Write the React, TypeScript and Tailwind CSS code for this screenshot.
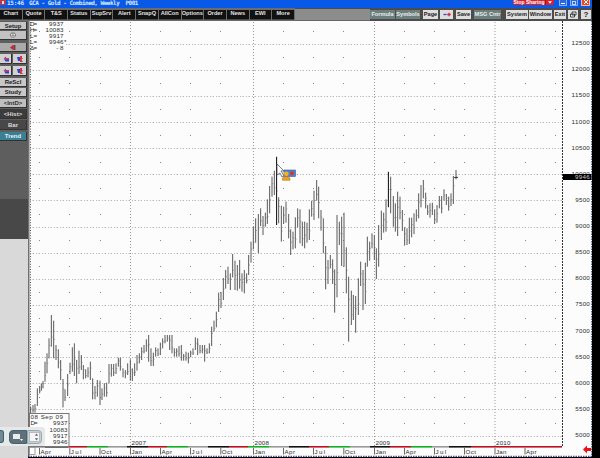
import React from "react";

type Bar = [number, number, number];

// Each group: origin in pixels, then bars as x, high, low in thirds of a pixel.
const groups: { ox: number; oy: number; bars: Bar[] }[] = [
  {
    ox: 0,
    oy: 300,
    bars: [
      [92, 320, 340], [99, 315, 338], [105, 312, 338], [112, 265, 318], [119, 258, 280], [124, 250, 272], [129, 243, 265],
      [135, 185, 245], [141, 160, 220], [147, 115, 175], [154, 45, 140], [161, 62, 175], [168, 135, 180], [175, 148, 205],
      [182, 180, 240], [189, 237, 322], [195, 268, 303], [203, 222, 288], [210, 188, 222], [217, 142, 215], [223, 130, 228],
      [230, 180, 250], [237, 152, 222], [244, 165, 210], [250, 195, 238], [257, 208, 235], [264, 202, 232], [271, 185, 240],
      [278, 235, 298], [285, 258, 298], [292, 240, 290], [300, 242, 315], [306, 265, 300], [313, 250, 290], [320, 248, 290],
      [327, 192, 250], [334, 192, 230], [341, 192, 228], [348, 190, 222], [355, 173, 200], [361, 173, 212], [369, 205, 232],
      [376, 210, 235], [383, 190, 225], [391, 178, 242], [397, 205, 243], [404, 190, 228], [411, 165, 212], [418, 160, 190],
    ],
  },
  {
    ox: 140,
    oy: 320,
    bars: [
      [5, 82, 120], [12, 75, 100], [19, 58, 95], [26, 45, 125], [33, 85, 138], [40, 98, 138], [47, 82, 110], [54, 85, 108],
      [61, 68, 105], [68, 55, 85], [75, 45, 70], [82, 45, 65], [89, 45, 90], [96, 45, 100], [103, 85, 110], [110, 85, 110],
      [117, 78, 110], [124, 75, 122], [131, 102, 122], [138, 95, 122], [145, 98, 130], [152, 92, 112], [159, 85, 105],
      [166, 52, 90], [173, 55, 105], [180, 75, 100], [187, 75, 100], [194, 75, 125], [201, 85, 102], [208, 70, 100],
      [215, 20, 78], [222, 2, 35], [229, -25, 22], [236, -82, -24], [243, -84, -36], [250, -126, -60], [257, -150, -94],
      [264, -160, -108],
    ],
  },
  {
    ox: 220,
    oy: 140,
    bars: [
      [31, 400, 450], [38, 342, 412], [45, 362, 450], [52, 375, 452], [59, 360, 446], [66, 400, 455], [73, 390, 460],
      [80, 400, 430], [86, 345, 405], [93, 305, 368], [100, 260, 328], [107, 235, 308], [115, 222, 340], [122, 205, 258],
      [129, 228, 285], [136, 218, 260], [142, 178, 252], [149, 138, 220], [156, 110, 170], [163, 92, 165], [170, 50, 255],
      [176, 172, 250], [184, 197, 305], [191, 200, 252], [198, 185, 248], [206, 222, 295], [212, 268, 345], [219, 275, 328],
      [226, 232, 325], [233, 205, 262], [240, 208, 310], [247, 245, 318], [254, 245, 325], [261, 248, 308], [268, 208, 300],
      [275, 182, 230], [282, 152, 240], [290, 120, 182], [296, 140, 235],
    ],
  },
  {
    ox: 320,
    oy: 160,
    bars: [
      [3, 150, 212], [10, 175, 280], [17, 258, 388], [24, 300, 372], [31, 285, 325], [38, 298, 372], [44, 328, 458],
      [51, 165, 412], [58, 185, 255], [65, 170, 318], [72, 158, 320], [79, 262, 400], [86, 350, 545], [94, 392, 495],
      [100, 405, 480], [107, 408, 518], [115, 355, 465], [122, 305, 378], [129, 330, 450], [136, 308, 432], [142, 230, 320],
      [149, 245, 302], [156, 220, 265], [163, 225, 300], [169, 265, 357], [176, 195, 320], [184, 152, 240], [191, 158, 218],
      [198, 118, 215], [205, 35, 142],
    ],
  },
  {
    ox: 390,
    oy: 150,
    bars: [
      [2, 80, 190], [10, 138, 230], [16, 160, 245], [23, 125, 258], [30, 140, 208], [37, 180, 243], [44, 232, 287],
      [51, 235, 285], [58, 203, 282], [65, 203, 262], [72, 190, 252], [79, 178, 215], [86, 130, 205], [93, 105, 172],
      [100, 90, 145], [107, 128, 175], [113, 165, 195], [120, 160, 203], [127, 158, 195], [134, 178, 222], [141, 165, 218],
      [148, 138, 175], [155, 138, 190], [162, 118, 152], [169, 132, 165], [176, 140, 182], [183, 130, 168], [190, 78, 162],
      [198, 60, 88],
    ],
  },
];

const prices = [12500, 12000, 11500, 11000, 10500, 10000, 9500, 9000, 8500, 8000, 7500, 7000, 6500, 6000, 5500, 5000];
const rowY = (i: number) => 44.2 + i * 26.12;

const quarters: [number, string][] = [
  [39.5, "Apr"], [69.8, "Jul"], [100, "Oct"], [130.5, "Jan"], [160.5, "Apr"], [190.5, "Jul"], [220.8, "Oct"], [253.5, "Jan"],
  [283.5, "Apr"], [313.5, "Jul"], [343.8, "Oct"], [374.5, "Jan"], [404.5, "Apr"], [434.5, "Jul"], [464.5, "Oct"],
  [495, "Jan"], [525, "Apr"],
];
const dotX = [39.5, 69.8, 100, 160.5, 190.5, 220.8, 283.5, 313.5, 343.8, 404.5, 434.5, 464.5, 525, 555];
const years: [number, string][] = [[130.5, "2007"], [253.5, "2008"], [374.5, "2009"], [495, "2010"]];

const strip: [number, number, string][] = [
  [35, 45, "#777"], [45, 68, "#111"], [68, 87, "#c01020"], [87, 108, "#10b020"], [108, 127, "#999"], [127, 148, "#111"],
  [148, 167, "#c01020"], [167, 188, "#10b020"], [188, 208, "#999"], [208, 229, "#111"], [229, 248, "#c01020"],
  [248, 269, "#10b020"], [269, 289, "#999"], [289, 309, "#111"], [309, 329, "#c01020"], [329, 350, "#10b020"],
  [350, 370, "#999"], [370, 390, "#111"], [390, 411, "#c01020"], [411, 432, "#10b020"], [432, 449, "#999"],
  [449, 471, "#111"], [471, 562, "#c01020"],
];

// Chart lettering: narrow digits with a fixed advance.
const SANS = '"Liberation Sans", Arial, sans-serif';

function Chart() {
  return (
    <svg width="564" height="436" viewBox="28 21 564 436" className="block h-[436px] w-[564px] shrink-0 bg-[#fcfcfc]">
      <g stroke="#b8b8b8" strokeWidth="1">
        {prices.map((p, i) => (
          <line key={p} x1={i === 0 ? 66 : 30} x2="562" y1={Math.floor(rowY(i)) + 0.5} y2={Math.floor(rowY(i)) + 0.5} strokeDasharray="1 1.5 1.5 2" />
        ))}
      </g>
      {years.map(([x]) => (
        <line key={x} x1={x} x2={x} y1="22" y2="446" stroke="#999" strokeDasharray="1 2" />
      ))}
      {Array.from({ length: 16 }, (_, i) =>
        dotX.map((x) => (
          <rect key={`${i}-${x}`} x={Math.floor(x)} y={Math.round(31 + i * 26.12)} width="1" height="1" fill="#888" />
        )),
      )}

      {groups.map((g) => (
        <g key={`${g.ox}-${g.oy}`}>
          {g.bars.map(([x, hi, lo], i) => {
            const px = g.ox + x / 3;
            const top = g.oy + hi / 3;
            const bottom = g.oy + lo / 3;
            const close = top + (bottom - top) * (i % 3 === 0 ? 0.35 : i % 3 === 1 ? 0.7 : 0.5);
            return (
              <g key={x}>
                <line x1={px} x2={px} y1={top} y2={bottom} stroke="#585858" strokeWidth="1" />
                <line x1={px} x2={px + 1.3} y1={close} y2={close} stroke="#777" strokeWidth="0.6" />
              </g>
            );
          })}
        </g>
      ))}
      <g stroke="#222">
        <line x1="276.5" x2="276.5" y1="157" y2="225" />
        <line x1="388.5" x2="388.5" y1="172" y2="207" />
        <line x1="454" x2="458" y1="177.5" y2="177.5" strokeWidth="0.8" />
      </g>

      <rect x="28" y="21" width="1.5" height="436" fill="#707070" />
      <line x1="30.5" x2="30.5" y1="22" y2="446" stroke="#555" strokeDasharray="1 1.6" />
      <line x1="562.5" x2="562.5" y1="21" y2="447" stroke="#333" strokeDasharray="2 1" />
      {strip.map(([a, b, c]) => (
        <rect key={a} x={a} y="446" width={b - a} height="1.6" fill={c} />
      ))}

      <g fontFamily={SANS} fontSize="6.2" fill="#2c2c2c">
        {years.map(([x, y]) => (
          <text key={y} x={x + 1} y="445" textLength="14.5">{y}</text>
        ))}
        {quarters.map(([x, m]) => (
          <g key={x}>
            <line x1={x} x2={x} y1="448" y2="454.5" stroke="#444" strokeWidth="0.8" />
            <text x={x + 1} y="453.5" textLength="10.5">{m}</text>
          </g>
        ))}
        {["D=", "H=", "L=", "L=", "Δ="].map((t, i) => (
          <text key={i} x="30" y={25.8 + i * 6.1} textLength="7.2">{t}</text>
        ))}
        {["9937", "10083", "9917", "9946", "-8"].map((t, i) => (
          <text key={t} x={63.5 - t.length * 3.6} y={25.8 + i * 6.1} textLength={t.length * 3.6}>{t}</text>
        ))}
        <text x="64" y="44.3">*</text>
        <rect x="29.5" y="413.5" width="39.5" height="33" fill="#fcfcfc" stroke="#777" />
        <text x="30.5" y="419.2" textLength="32.5">08 Sep 09</text>
        <text x="30.5" y="425.4" textLength="7.2">D=</text>
        {["9937", "10083", "9917", "9946"].map((t, i) => (
          <text key={t} x={67.5 - t.length * 3.6} y={425.4 + i * 6.2} textLength={t.length * 3.6}>{t}</text>
        ))}
        {prices.map((p, i) => {
          const w = String(p).length * 3.65;
          return <text key={p} x={589.8 - w} y={rowY(i) + 1} textLength={w}>{p}</text>;
        })}
      </g>
      <rect x="29.5" y="447.5" width="5.5" height="7" fill="#fff" stroke="#888" strokeWidth="0.8" />
      <rect x="563" y="174" width="28.5" height="6" fill="#000" />
      <text x="575" y="179.2" textLength="14.6" fontFamily={SANS} fontSize="6.2" fill="#ccc">9946</text>
      <path d="M583 449.5l4-4v2.5h4v3h-4v2.5z" fill="#ee1111" />
      <line x1="28" x2="592" y1="456.3" y2="456.3" stroke="#222266" strokeDasharray="1.5 1" />
      <line x1="591.6" x2="591.6" y1="21" y2="457" stroke="#223388" strokeWidth="0.8" strokeDasharray="1.5 1" />

      {/* mouse pointer carrying the session badge */}
      <path d="M277 164l7 7h-3l3 5-2 1-2-4-3 2z" fill="#fff" stroke="#444" strokeWidth="0.7" />
      <rect x="284" y="170" width="11.5" height="6.5" fill="#4c83cf" stroke="#2e5f9e" strokeWidth="0.6" />
      <circle cx="292" cy="173.3" r="2" fill="#dc3520" />
      <circle cx="286.3" cy="173.8" r="2.4" fill="#f4ae28" />
      <path d="M282.5 180.3v-2.2q3.8-3.3 7.5 0v2.2z" fill="#f2a21c" stroke="#9b6a14" strokeWidth="0.5" />
    </svg>
  );
}

const menu = ["Chart", "Quote", "T&S", "Status", "SupSrv", "Alert", "SnapQ", "AllCon", "Options", "Order", "News", "EWI", "More"];

const light = "bg-[#dedede] text-[#222]";
const teal = "bg-[#6d7f7d] text-[#e8eeee]";
const tools: [string, string][] = [
  ["Formula", `w-[25px] ${teal}`],
  ["Symbols", `ml-[1px] w-[24px] ${teal}`],
  ["Page", `ml-[3px] w-[15px] ${light}`],
  ["-+", `ml-[2px] w-[13px] ${light}`],
  ["Save", `ml-[3px] w-[15px] ${light}`],
  ["MSG Cntr", `ml-[3px] w-[27px] ${teal}`],
  ["System", `ml-[5px] w-[22px] ${light}`],
  ["Window", `ml-[1px] w-[23px] ${light}`],
  ["Exit", `ml-[2px] w-[12px] ${light}`],
  ["restore", `ml-[2px] w-[10px] ${light}`],
  ["?", `ml-[3px] w-[10px] ${light}`],
];

function TinyText({ children, size = "text-[6px]" }: { children: React.ReactNode; size?: string }) {
  return <span className={`whitespace-nowrap font-['Liberation_Sans',sans-serif] font-bold leading-none ${size}`}>{children}</span>;
}

function SideButton({ className, children }: { className: string; children: React.ReactNode }) {
  return (
    <div className={`flex shrink-0 items-center justify-center overflow-hidden border-b border-r border-[#333] ${className}`}>
      {children}
    </div>
  );
}

function Arrows({ flip }: { flip?: boolean }) {
  return (
    <svg viewBox="0 0 8 6" className="h-[6px] w-[8px]">
      {flip ? (
        <>
          <path d="M1 1h3v4H2z" fill="#3340cc" />
          <path d="M4 0h2v2h1L5.5 4 7 6H4z" fill="#d3344a" />
        </>
      ) : (
        <>
          <path d="M1.5 2.5L4 .5V2h3v1.5H4z" fill="#d3344a" />
          <path d="M2 3.2h5v2.3H3.5z" fill="#3340cc" />
        </>
      )}
    </svg>
  );
}

function Sidebar() {
  return (
    <div className="relative flex h-[437px] w-[28px] shrink-0 flex-col bg-[#d9d9d9]">
      <div className="flex h-[178px] flex-col bg-[#5e5e5e]">
        <SideButton className="mt-[1px] h-[8px] w-[27px] bg-[#c6c6c6] text-[#222]"><TinyText>Setup</TinyText></SideButton>
        <SideButton className="mt-[1px] h-[9px] w-[27px] bg-[#c2c2c2]">
          <svg viewBox="0 0 8 6" className="h-[6px] w-[8px]">
            <ellipse cx="4" cy="3" rx="2.7" ry="2.2" fill="#eee" stroke="#555" strokeWidth=".7" />
            <path d="M2.5 3.4h3M3 2h2" stroke="#555" strokeWidth=".7" />
          </svg>
        </SideButton>
        <SideButton className="mt-[3px] h-[9px] w-[27px] bg-[#aaa]">
          <svg viewBox="0 0 8 7" className="h-[7px] w-[8px]">
            <path d="M1 3.5L4 1v5z" fill="#c22438" /><path d="M4 1h2v5H4z" fill="#cc3444" /><path d="M5.4 1h1v5h-1z" fill="#444" />
          </svg>
        </SideButton>
        <div className="mt-[2px] flex gap-[1px]">
          <SideButton className="h-[10px] w-[12px] bg-[#d2d2d2]"><Arrows /></SideButton>
          <SideButton className="h-[10px] w-[14px] bg-[#d2d2d2]"><Arrows flip /></SideButton>
        </div>
        <div className="mt-[2px] flex gap-[1px]">
          <SideButton className="h-[10px] w-[12px] bg-[#d2d2d2]"><Arrows /></SideButton>
          <SideButton className="h-[10px] w-[14px] bg-[#d2d2d2]"><Arrows flip /></SideButton>
        </div>
        <SideButton className="mt-[2px] h-[9px] w-[27px] bg-[#c8c8c8] text-[#222]"><TinyText>ReScl</TinyText></SideButton>
        <SideButton className="mt-[1px] h-[9px] w-[27px] bg-[#c8c8c8] text-[#222]"><TinyText>Study</TinyText></SideButton>
        <SideButton className="mt-[2px] h-[9px] w-[27px] bg-[#c0c0c0] text-[#333]"><TinyText>&lt;IntD&gt;</TinyText></SideButton>
        <SideButton className="mt-[1px] h-[10px] w-[27px] bg-[#3b3b3b] text-[#ddd]"><TinyText>&lt;Hist&gt;</TinyText></SideButton>
        <SideButton className="mt-[1px] h-[10px] w-[27px] bg-[#484848] text-[#ddd]"><TinyText>Bar</TinyText></SideButton>
        <SideButton className="mt-[2px] h-[9px] w-[27px] bg-[#3a7f94] text-[#e4f4f8]"><TinyText>Trend</TinyText></SideButton>
      </div>
      <div className="h-[40px] bg-[#484848]" />
      {/* floating session controls, overlapping the chart corner */}
      <div className="absolute bottom-[12px] left-0 flex h-[19px] w-[45px] items-center rounded-r-[3px] bg-[#e6e8e9]">
        <div className="h-[13px] w-[4px] rounded-r-[3px] border border-l-0 border-[#37616e] bg-[#738a94]" />
        <div className="ml-[5px] flex h-[14px] w-[18px] items-center justify-center rounded-l-[4px] border border-[#3f6672] bg-[#607078]">
          <svg viewBox="0 0 12 8" className="h-[8px] w-[12px]">
            <rect x="1" y="1" width="7" height="5" fill="#e8eef0" /><path d="M8 6h3L9.5 8z" fill="#fff" />
          </svg>
        </div>
        <div className="flex h-[14px] w-[15px] items-center justify-center rounded-r-[4px] border border-[#98a8b0] bg-[#c5d0d5]">
          <svg viewBox="0 0 11 10" className="h-[10px] w-[11px]">
            <rect x="0.5" y="0.5" width="10" height="9" fill="#f5f5f5" stroke="#aaa" strokeWidth=".7" />
            <path d="M5.8 3.8L7.5 1.5l1.7 2.3zM5.8 6.2l1.7 2.3 1.7-2.3z" fill="#667" />
          </svg>
        </div>
      </div>
    </div>
  );
}

export default function App() {
  return (
    <div className="h-[458px] w-[600px] overflow-hidden bg-black antialiased">
      <div className="flex h-[8px] w-[592px] items-start justify-between overflow-hidden bg-[#0859e8]">
        <div className="flex h-[5px] items-center text-[#dce8ff]">
          <div className="flex h-[5px] w-[6px] items-center justify-center bg-[#b53a50]"><div className="h-[3px] w-[2px] bg-[#f3d6d6]" /></div>
          <div className="ml-[1px] flex h-[5px] items-center whitespace-pre font-['DejaVu_Sans_Mono',monospace] text-[6px] font-bold leading-[5px]">
            <span className="w-[22px] tracking-[-0.25px]">15:46</span>
            <span className="tracking-[-0.5px]">GCA - Gold - Combined, Weekly  P001</span>
          </div>
        </div>
        <div className="flex h-[6px] items-start">
          <div className="flex h-[5px] w-[41px] items-center rounded-b-[2px] bg-[#d9202c] font-['Liberation_Sans',sans-serif] text-[5px] font-bold leading-[5px] text-white">
            <span className="flex h-[5px] w-[33px] items-center justify-center whitespace-nowrap border-r border-[#a01420]">Stop Sharing</span>
            <svg viewBox="0 0 5 3" className="ml-[2px] h-[3px] w-[4px]"><path d="M0 0h5L2.5 3z" fill="#fff" /></svg>
          </div>
          <div className="ml-[5px] flex h-[6px] w-[8px] items-end justify-center rounded-b-[1px] border border-t-0 border-[#86aef6] bg-[#2d66dd]"><div className="mb-[1px] h-[1px] w-[4px] bg-white" /></div>
          <div className="ml-[3px] flex h-[6px] w-[8px] items-center justify-center rounded-b-[1px] border border-t-0 border-[#86aef6] bg-[#2d66dd]"><div className="h-[4px] w-[4px] border border-[#bdd2ff]" /></div>
          <div className="ml-[3px] mr-[2px] flex h-[6px] w-[9px] items-center justify-center rounded-b-[1px] border border-t-0 border-[#f3b6a2] bg-[#df4c2c]">
            <svg viewBox="0 0 6 5" className="h-[5px] w-[6px]"><path d="M1 0l4 4M5 0L1 4" stroke="#fff" /></svg>
          </div>
        </div>
      </div>

      <div className="flex h-[13px] w-[592px] items-center bg-[#4c4c4c]">
        <div className="flex h-[13px] w-[295px] items-center bg-[#6c6c6c]">
          {menu.map((m) => (
            <div key={m} className="mr-[1px] flex h-[10px] min-w-0 flex-1 items-center justify-center overflow-hidden border-b border-[#444] bg-[#111] text-[#e2e2e2]">
              <TinyText size="text-[5.6px]">{m}</TinyText>
            </div>
          ))}
        </div>
        <div className="h-[12px] w-[75px] border-b border-[#666] bg-[#8c8c8c]" />
        <div className="flex items-center">
          {tools.map(([t, cls]) => (
            <div key={t} className={`flex h-[9px] shrink-0 items-center justify-center overflow-hidden ${cls}`}>
              {t === "restore" ? (
                <svg viewBox="0 0 8 7" className="h-[7px] w-[8px]"><path d="M3 1h4v3H3zM1.5 3h4v3h-4z" fill="#eee" stroke="#222" strokeWidth=".8" /></svg>
              ) : t === "-+" ? (
                <svg viewBox="0 0 8 5" className="h-[5px] w-[8px]"><path d="M0.5 2.5h3" stroke="#3344cc" strokeWidth="1.3" /><path d="M4.2 2.5h3.6M6 .8v3.4" stroke="#d02848" strokeWidth="1.3" /></svg>
              ) : (
                <TinyText size={t === "?" ? "text-[8px]" : "text-[5.6px]"}>{t}</TinyText>
              )}
            </div>
          ))}
        </div>
      </div>

      <div className="flex h-[436px] w-[592px] overflow-hidden">
        <div className="relative z-10 w-[28px] shrink-0"><Sidebar /></div>
        <Chart />
      </div>
      <div className="h-[1px] w-[28px] bg-[#d9d9d9]" />
    </div>
  );
}
